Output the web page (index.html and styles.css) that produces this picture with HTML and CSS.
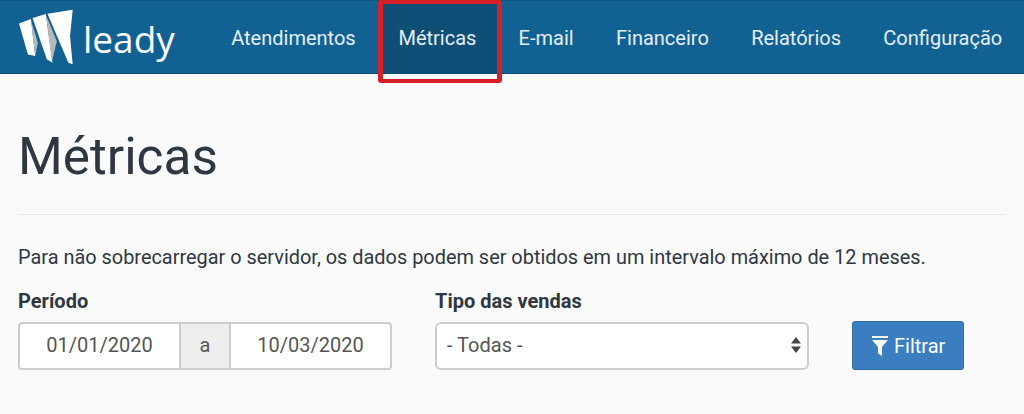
FILE: index.html
```html
<!DOCTYPE html>
<html lang="pt-BR">
  <head>
    <meta charset="UTF-8" />
    <title>Métricas</title>
    <link rel="stylesheet" href="styles.css">
  </head>
  <body>
    <!-- Navbar -->
    <header class="navbar">
      <a href="#" class="logo">
        <svg class="logo-mark" width="58" height="58" viewBox="50 25 175 175">
          <polygon points="56,72 92,58 105,170 83,165" fill="#fff"/>
          <polygon points="92,62 113,130 105,168" fill="#b9b9b9"/>
          <polygon points="97,55 137,43 157,190 140,180" fill="#fff"/>
          <polygon points="138,48 170,125 155,188" fill="#b9b9b9"/>
          <polygon points="142,42 218,30 210,110 218,195 205,190" fill="#fff"/>
        </svg>
        <span class="logo-text">leady</span>
      </a>
      <nav class="nav-links">
        <a href="#" class="nav-link">Atendimentos</a>
        <a href="#" class="nav-link active">Métricas</a>
        <a href="#" class="nav-link">E-mail</a>
        <a href="#" class="nav-link">Financeiro</a>
        <a href="#" class="nav-link">Relatórios</a>
        <a href="#" class="nav-link">Configuração</a>
      </nav>
    </header>

    <div class="container">
      <h1>Métricas</h1>
      <hr />
      <p class="notice">Para não sobrecarregar o servidor, os dados podem ser obtidos em um intervalo máximo de 12 meses.</p>

      <form class="filters">
        <div class="form-group period-group">
          <label>Período</label>
          <div class="input-group">
            <input type="text" value="01/01/2020" />
            <span class="input-addon">a</span>
            <input type="text" value="10/03/2020" />
          </div>
        </div>
        <div class="form-group type-group">
          <label for="tipo">Tipo das vendas</label>
          <div class="select-box" id="tipo">
            <span>- Todas -</span>
            <svg width="10" height="18" viewBox="0 0 10 18">
              <polygon points="5,1 10,7.5 0,7.5" fill="#444"/>
              <polygon points="0,10.5 10,10.5 5,17" fill="#444"/>
            </svg>
          </div>
        </div>
        <button type="button" class="button">
          <svg width="16" height="20" viewBox="0 0 16 20">
            <rect x="0" y="0" width="16" height="2" fill="#fff"/>
            <polygon points="0,4 16,4 10,11 10,20 6,17.5 6,11" fill="#fff"/>
          </svg>
          Filtrar
        </button>
      </form>
    </div>
  </body>
</html>
```

FILE: styles.css
```css
* {
  box-sizing: border-box;
}

body {
  margin: 0;
  background-color: #fafafa;
  color: #2f3742;
  font-family: Roboto, "Liberation Sans", sans-serif;
  font-size: 20px;
  overflow: hidden;
}

/* Navbar */
.navbar {
  display: flex;
  align-items: stretch;
  height: 74px;
  background-color: #126193;
  border-top: 1px solid #0f5583;
  border-bottom: 1px solid #0f4f76;
}

.logo {
  display: flex;
  align-items: center;
  flex: none;
  gap: 8px;
  padding-left: 17px;
  width: 210px;
  color: #fff;
  text-decoration: none;
}

.logo-mark {
  flex: none;
}

.logo-text {
  font-family: "Open Sans", sans-serif;
  font-weight: 400;
  font-size: 37px;
  line-height: 1;
  margin-top: 2px;
}

.nav-links {
  display: flex;
}

.nav-link {
  position: relative;
  display: flex;
  align-items: center;
  flex: none;
  padding: 2px 21.2px 0;
  color: #e4eef5;
  font-size: 20px;
  white-space: nowrap;
  text-decoration: none;
}

.nav-link.active {
  margin-left: 6.6px;
  padding-left: 15px;
  padding-right: 21px;
  background-color: #0f4f76;
}

/* red marker drawn over the active tab */
.nav-link.active::after {
  content: "";
  position: absolute;
  top: -1px;
  left: -5px;
  right: -5px;
  height: 83px;
  box-sizing: border-box;
  border: solid #d81f26;
  border-width: 4px 5px;
  border-radius: 3px;
}

.container {
  padding: 0 18px;
}

h1 {
  margin: 51px 0 0;
  font-size: 51.3px;
  font-weight: 400;
  line-height: 64px;
  color: #2f3742;
}

hr {
  margin: 25px 0 0;
  border: none;
  border-top: 1px solid #e8e8e8;
}

.notice {
  margin: 31px 0 0;
  font-size: 19.92px;
  line-height: 24px;
  color: #2f3742;
}

.filters {
  display: flex;
  align-items: flex-end;
  margin-top: 20px;
}

.form-group label {
  display: block;
  margin-bottom: 10px;
  font-weight: 700;
  line-height: 22px;
}

.period-group {
  width: 374px;
}

.type-group {
  margin-left: 43px;
  width: 374px;
}

.input-group {
  display: flex;
  height: 48px;
}

.input-group input {
  width: 163px;
  border: 2px solid #ccc;
  border-radius: 4px 0 0 4px;
  background: #fff;
  color: #555;
  font-family: inherit;
  font-size: 20px;
  text-align: center;
  padding: 0 0 2px;
}

.input-group input:last-child {
  border-radius: 0 4px 4px 0;
}

.input-addon {
  display: flex;
  align-items: center;
  justify-content: center;
  width: 48px;
  padding-bottom: 2px;
  background: #eee;
  color: #555;
  border-top: 2px solid #ccc;
  border-bottom: 2px solid #ccc;
}

.select-box {
  display: flex;
  align-items: center;
  justify-content: space-between;
  height: 48px;
  padding: 0 6px 2px 10px;
  background: #fff;
  border: 2px solid #ccc;
  border-radius: 6px;
  color: #555;
}

.button {
  display: flex;
  align-items: center;
  gap: 6px;
  height: 49px;
  margin-left: 43px;
  padding: 0 18px 0 19px;
  border: 1px solid #2e6da4;
  border-radius: 3px;
  background-color: #3a7ebf;
  color: #fff;
  font-family: inherit;
  font-size: 20px;
}
```
